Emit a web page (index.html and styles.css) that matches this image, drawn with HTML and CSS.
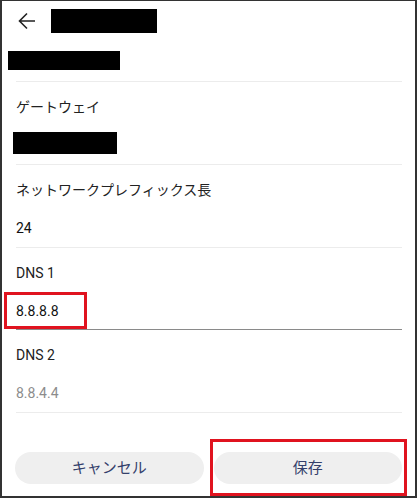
FILE: index.html
```html
<!DOCTYPE html>
<html lang="ja">
<head>
<meta charset="utf-8">
<link rel="stylesheet" href="styles.css">
</head>
<body>
<div class="screen">
  <div class="header">
    <svg class="back" width="18" height="18" viewBox="0 0 18 18"><path d="M17 9H1.5M9 1.5L1.5 9L9 16.5" fill="none" stroke="#222" stroke-width="1.6"/></svg>
    <div class="redact redact-title"></div>
  </div>
  <div class="redact redact-sub"></div>
  <div class="fields">
    <div class="field">
      <div class="label">ゲートウェイ</div>
      <div class="redact redact-value"></div>
    </div>
    <div class="field">
      <div class="label">ネットワークプレフィックス長</div>
      <div class="value">24</div>
    </div>
    <div class="field field-focused">
      <div class="label">DNS 1</div>
      <div class="value">8.8.8.8</div>
    </div>
    <div class="field">
      <div class="label">DNS 2</div>
      <div class="value value-hint">8.8.4.4</div>
    </div>
  </div>
  <div class="actions">
    <div class="btn">キャンセル</div>
    <div class="btn">保存</div>
  </div>
  <div class="mark mark-dns"></div>
  <div class="mark mark-save"></div>
</div>
</body>
</html>
```
FILE: styles.css
```css
html, body {
  margin: 0;
  padding: 0;
  background: #fff;
}
.screen {
  position: relative;
  box-sizing: border-box;
  width: 417px;
  height: 498px;
  border-style: solid;
  border-color: #333;
  border-width: 1px 2px 2px 2px;
  background: #fff;
  font-family: Roboto, "Noto Sans CJK JP", sans-serif;
  color: #222;
}
.header {
  display: flex;
  align-items: center;
  height: 24px;
  padding: 8px 0 0 16px;
}
.back {
  display: block;
}
.redact {
  background: #000;
}
.redact-title {
  width: 106px;
  height: 24px;
  margin-left: 15px;
}
.redact-sub {
  width: 112px;
  height: 19px;
  margin: 18px 0 0 6px;
}
.fields {
  margin: 11px 13px 0 14px;
  border-top: 1px solid #ececec;
}
.field {
  box-sizing: border-box;
  height: 83px;
  padding-top: 15px;
  border-bottom: 1px solid #ececec;
}
.field-focused {
  height: 82px;
  border-bottom-color: #8a8a8a;
}
.label {
  font-size: 14px;
  line-height: 20px;
  color: #222;
}
.value {
  margin-top: 18px;
  font-size: 14px;
  line-height: 20px;
  color: #111;
}
.value-hint {
  color: #8c8c8c;
}
.redact-value {
  width: 104px;
  height: 22px;
  margin: 15px 0 0 -3px;
}
.actions {
  display: flex;
  gap: 10px;
  margin: 39px 13px 0 13px;
}
.btn {
  flex: 1;
  height: 32px;
  border-radius: 16px;
  background: #efefef;
  color: #34406b;
  font-size: 15px;
  line-height: 32px;
  text-align: center;
}
.mark {
  position: absolute;
  box-sizing: border-box;
  border: 3px solid #e0131f;
}
.mark-dns {
  left: 2px;
  top: 291px;
  width: 83px;
  height: 37px;
}
.mark-save {
  left: 208px;
  top: 438px;
  width: 197px;
  height: 57px;
}
```
